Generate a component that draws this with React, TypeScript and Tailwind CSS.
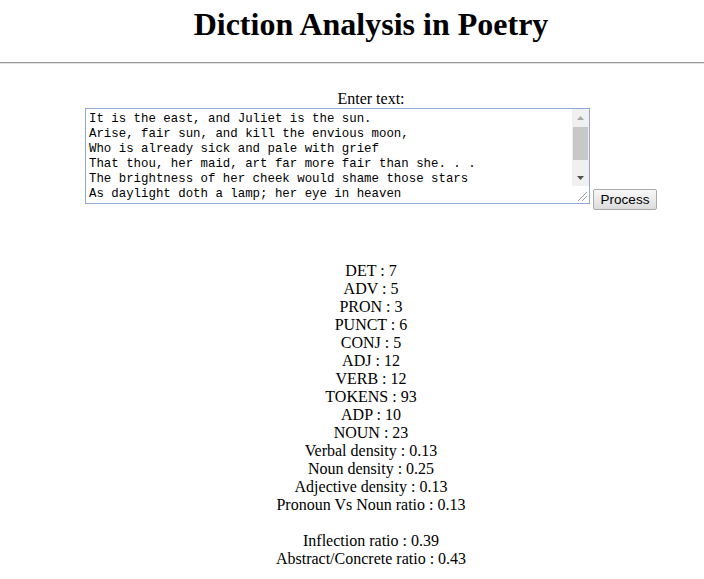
import { useState } from 'react'

const poem = `It is the east, and Juliet is the sun.
Arise, fair sun, and kill the envious moon,
Who is already sick and pale with grief
That thou, her maid, art far more fair than she. . .
The brightness of her cheek would shame those stars
As daylight doth a lamp; her eye in heaven
Would through the airy region stream so bright
That birds would sing and think it were not night.`

const counts: [string, string][] = [
  ['DET', '7'],
  ['ADV', '5'],
  ['PRON', '3'],
  ['PUNCT', '6'],
  ['CONJ', '5'],
  ['ADJ', '12'],
  ['VERB', '12'],
  ['TOKENS', '93'],
  ['ADP', '10'],
  ['NOUN', '23'],
  ['Verbal density', '0.13'],
  ['Noun density', '0.25'],
  ['Adjective density', '0.13'],
  ['Pronoun Vs Noun ratio', '0.13'],
]

const ratios: [string, string][] = [
  ['Inflection ratio', '0.39'],
  ['Abstract/Concrete ratio', '0.43'],
]

// old-style scrollbar next to the textarea (headless hides the native one)
function Scrollbar() {
  return (
    <div className="flex w-[17px] flex-col bg-[#f0f0f0]">
      <div className="flex h-[17px] items-center justify-center">
        <svg width="7" height="4" viewBox="0 0 7 4">
          <path d="M0 4 L3.5 0 L7 4 Z" fill="#a8a8a8" />
        </svg>
      </div>
      <div className="flex-1 px-[1px] pt-[1px]">
        <div className="h-[33px] bg-[#c8c8c8]" />
      </div>
      <div className="flex h-[17px] items-center justify-center">
        <svg width="7" height="4" viewBox="0 0 7 4">
          <path d="M0 0 L7 0 L3.5 4 Z" fill="#505050" />
        </svg>
      </div>
      <div className="flex h-[17px] items-end justify-end bg-white p-[2px]">
        <svg width="10" height="10" viewBox="0 0 10 10">
          <path d="M10 1 L1 10 M10 5 L5 10" stroke="#9a9a9a" strokeWidth="1" />
        </svg>
      </div>
    </div>
  )
}

export default function App() {
  const [text, setText] = useState(poem)

  return (
    <div className="min-h-screen bg-white text-black font-['Liberation_Serif',serif] text-base leading-[18px]">
      {/* Header */}
      <h1 className="pl-[38px] pt-[6px] text-center text-[32px] font-bold leading-[37px]">
        Diction Analysis in Poetry
      </h1>
      <hr className="mt-[19px] h-0 border-0 border-t border-b border-t-[#9a9a9a] border-b-[#e2e2e2]" />

      {/* Input */}
      <form className="pl-[38px] pt-[26px] text-center" onSubmit={(e) => e.preventDefault()}>
        <div>Enter text:</div>
        <div className="flex items-end justify-center gap-[3px]">
          <div className="flex h-[96px] w-[505px] border border-[#8fa9d4] bg-white">
            <textarea
              value={text}
              onChange={(e) => setText(e.target.value)}
              className="block h-full flex-1 resize-none overflow-hidden bg-white pl-[3px] pr-[2px] pt-[3px] pb-[1px] text-left font-['Liberation_Mono',monospace] text-[12.4px] leading-[15px] text-black outline-none"
            />
            <Scrollbar />
          </div>
          <button
            type="submit"
            className="mb-[-6px] h-[21px] w-[64px] rounded-[2px] border border-[#a9a9a9] bg-gradient-to-b from-[#f8f8f8] to-[#dcdcdc] font-['Liberation_Sans',sans-serif] text-[13.5px] leading-[19px] text-black"
          >
            Process
          </button>
        </div>
      </form>

      {/* Results */}
      <div className="pl-[38px] pt-[58px] pb-4 text-center">
        {counts.map(([k, v]) => (
          <div key={k}>
            {k} : {v}
          </div>
        ))}
        <div className="h-[18px]" />
        {ratios.map(([k, v]) => (
          <div key={k}>
            {k} : {v}
          </div>
        ))}
      </div>
    </div>
  )
}
